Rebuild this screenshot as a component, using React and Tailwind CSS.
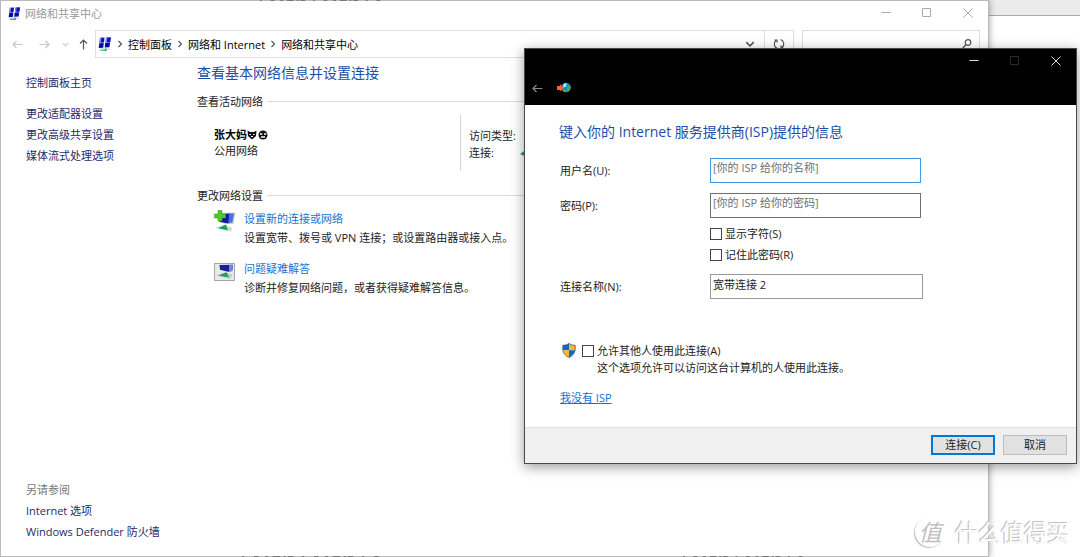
import React, { useState } from 'react';

const NetIcon = ({ className }) => (
  <svg viewBox="0 0 14 14" className={className} aria-hidden="true">
    <path d="M2 .8l4.500-.3-.5 5-4.600 .3zM8 .6l5-.4-.6 5-4.900 .3z" fill="#0b12b8" />
    <path d="M1.300 6.300l4.500-.3-.6 4.800-4.500 .3zM7.200 5.900l4.900-.3-.7 4.700-4.700 .3z" fill="#0408a4" />
    <path d="M2 .8l1.300-.1-.5 5-1.400 .1zM8 .6l1.300-.1-.5 4.900-1.300 .1z" fill="#7c9af0" />
    <path d="M.5 11.800l5-.7 7 .6-.5 1.300z" fill="#cfd8d4" />
    <path d="M1.500 12.500l5 .2 1.700-1.700.6 3.100-6.500-.5z" fill="#1fb457" />
  </svg>
);

const NewConnectionIcon = () => (
  <svg viewBox="0 0 22 24" className="w-[22px] h-6 shrink-0" aria-hidden="true">
    <path d="M8 4l13.500-.5-2 11.500-10-.5z" fill="#c3cbe6" />
    <path d="M6 5l10-.5-1.500 10-9-1.500z" fill="#1318a8" />
    <path d="M15 4.600l5-.2-1.600 8.800-4 1.200z" fill="#4d6ee0" />
    <path d="M4 1.500h4V5h3.500v4H8v3H4V9H.5V5H4z" fill="#4fc92c" stroke="#35a41c" strokeWidth=".6" />
    <path d="M.5 18.500l11-2.500 7 3-1.500 3.500-11-2.500z" fill="#d3d9d6" />
    <path d="M4 19.200l8-3.700 .5 2 1.500 3.800-4-.8z" fill="#11a550" />
  </svg>
);

const TroubleshootIcon = () => (
  <svg viewBox="0 0 21 18" className="w-[21px] h-[18px] shrink-0" aria-hidden="true">
    <rect x=".5" y=".5" width="20" height="17" fill="#e9eaec" stroke="#a5a7ab" />
    <path d="M5.500 2l13.500-.3-.8 6.300-4.200 .8-8-2z" fill="#1a2099" />
    <path d="M15 2l4-.2-.8 6.200-3.200 .5z" fill="#7087dd" />
    <path d="M2 12l9-2.500 8 2-3 4.500-9-2z" fill="#c4cccc" />
    <path d="M4.500 12.500l8-3.200 2.500 5-5-.8z" fill="#13a35a" />
  </svg>
);

const GlobeIcon = () => (
  <svg viewBox="0 0 15 12" className="w-[15px] h-3" aria-hidden="true">
    <circle cx="9" cy="5.500" r="4.800" fill="#2379d8" />
    <path d="M10.500 3.500l2.800 0q1 3.500-2 6L9.500 7.500zM5.500 7.500l4 .5-.5 2.300q-2 0-3.500-1.500z" fill="#35b44a" />
    <path d="M6 3q1-2 3.500-2L9.500 4 6.500 6z" fill="#a9e6ee" />
    <path d="M0 4h3V2l3.500 4L3 9.500V8H0z" fill="#ef6a2a" />
  </svg>
);

const Shield = () => (
  <svg viewBox="0 0 14 15" className="w-3.5 h-[15px] shrink-0" aria-hidden="true">
    <path d="M7 .5Q4.500 2.500.8 2.300V7.300H7z" fill="#0f68c8" />
    <path d="M7 .5Q9.500 2.500 13.200 2.300V7.300H7z" fill="#fbb829" />
    <path d="M.8 7.300H7v7.200Q2 12 .8 7.300z" fill="#fbb829" />
    <path d="M7 7.300h6.200Q12 12 7 14.500z" fill="#0f68c8" />
    <path d="M7 .5Q4.500 2.500.8 2.300V7Q1.500 12 7 14.500 12.500 12 13.200 7V2.300Q9.500 2.500 7 .5z" fill="none" stroke="#4d5968" strokeWidth=".8" />
  </svg>
);

const Arrow = ({ className }) => (
  <svg viewBox="0 0 11 9" className={className} fill="none" stroke="currentColor" strokeWidth="1.200" aria-hidden="true">
    <path d="M10.500 4.500H1M4.500 1L1 4.500 4.500 8" />
  </svg>
);

const Chevron = ({ className }) => (
  <svg viewBox="0 0 8 8" className={className} fill="none" stroke="currentColor" strokeWidth="1.200" aria-hidden="true">
    <path d="M2.500 1l3 3-3 3" />
  </svg>
);

const WindowButtons = ({ className, maxClass = '' }) => (
  <div className={`flex ${className}`}>
    <button aria-label="最小化" className="w-[41px] h-6 flex items-center justify-center">
      <svg viewBox="0 0 10 10" className="size-2.5" stroke="currentColor"><path d="M.5 4.500h9" /></svg>
    </button>
    <button aria-label="最大化" className={`w-[41px] h-6 flex items-center justify-center ${maxClass}`}>
      <svg viewBox="0 0 10 10" className="size-2.5" fill="none" stroke="currentColor"><path d="M.5 .5h8v8h-8z" /></svg>
    </button>
    <button aria-label="关闭" className="w-[41px] h-6 flex items-center justify-center">
      <svg viewBox="0 0 10 10" className="size-2.5" fill="none" stroke="currentColor"><path d="M.5 .5l9 9M9.500 .5l-9 9" /></svg>
    </button>
  </div>
);

const SectionTitle = ({ children }) => (
  <div className="flex items-center gap-1">
    <h2>{children}</h2>
    <div className="flex-1 h-px bg-[#dcdcdc]" />
  </div>
);

const Check = ({ id, label }) => (
  <div className="flex items-center gap-[3px] h-[21px]">
    <input id={id} type="checkbox" className="appearance-none size-3 border border-[#444] bg-white checked:bg-[#0078d7]" />
    <label htmlFor={id}>{label}</label>
  </div>
);

const crumbs = ['控制面板', '网络和 Internet', '网络和共享中心'];

const NetworkCenter = () => (
  <div className="absolute inset-y-0 left-0 right-[91px] bg-white border border-[#b9b9b9] shadow-[1px_0_6px_rgba(0,0,0,0.3)] flex flex-col">
    <header className="h-[29px] shrink-0 flex items-start justify-between pl-[7px]">
      <div className="flex items-center gap-1 h-[25px] text-[#999]">
        <NetIcon className="size-[13px]" />
        <span>网络和共享中心</span>
      </div>
      <WindowButtons className="text-[#aaa]" />
    </header>

    <nav className="h-7 shrink-0 flex items-stretch pr-2">
      <div className="w-[94px] shrink-0 flex items-center pl-[11px] text-[#c8c8c8]">
        <Arrow className="w-[11px] h-[9px]" />
        <Arrow className="w-[11px] h-[9px] ml-4 rotate-180" />
        <Chevron className="size-[7px] ml-3 rotate-90" />
        <Arrow className="w-[11px] h-[9px] ml-[9px] rotate-90 text-[#555]" />
      </div>
      <div className="flex-1 flex border border-[#dedede]">
        <div className="flex-1 flex items-center pl-0.5">
          <NetIcon className="size-3.5" />
          {crumbs.map((c) => (
            <React.Fragment key={c}>
              <Chevron className="size-2 mx-1 text-[#555]" />
              <a href="#" className="text-black">{c}</a>
            </React.Fragment>
          ))}
        </div>
        <button aria-label="展开" className="w-7 flex items-center justify-center text-[#555]">
          <Chevron className="size-2.5 rotate-90" />
        </button>
        <button aria-label="刷新" className="w-[29px] border-l border-[#dedede] flex items-center justify-center text-[#555]">
          <svg viewBox="0 0 12 12" className="size-3" fill="none" stroke="currentColor" strokeWidth="1.200">
            <path d="M4.500 10.500A4.600 4.600 0 0 1 3 2.500M1.500 2h2.500v2.500M7.500 1.500A4.600 4.600 0 0 1 9 9.500M10.500 10H8V7.500" />
          </svg>
        </button>
      </div>
      <div className="w-[178px] ml-2 flex items-center border border-[#dedede] pr-[7px]">
        <input aria-label="搜索" className="flex-1 min-w-0 outline-none" />
        <svg viewBox="0 0 10 10" className="size-2.5 text-[#555]" fill="none" stroke="currentColor" strokeWidth="1.200">
          <circle cx="6" cy="3.500" r="2.800" /><path d="M4 5.500L.5 9.500" />
        </svg>
      </div>
    </nav>

    <div className="flex-1 flex">
      <aside className="w-[171px] shrink-0 mr-[25px] pl-[25px] pb-3.5 flex flex-col text-[#1f2a6b] leading-[21px]">
        <a href="#" className="mt-3.5">控制面板主页</a>
        <a href="#" className="mt-2.5">更改适配器设置</a>
        <a href="#">更改高级共享设置</a>
        <a href="#">媒体流式处理选项</a>
        <h2 className="mt-auto text-[#777]">另请参阅</h2>
        <a href="#">Internet 选项</a>
        <a href="#">Windows Defender 防火墙</a>
      </aside>
      <main className="flex-1">
        <h1 className="mt-[3px] text-[14px] leading-6 text-[#1c4da8]">查看基本网络信息并设置连接</h1>
        <div className="mt-2">
          <SectionTitle>查看活动网络</SectionTitle>
        </div>
        <div className="flex mt-[5px] h-14">
          <div className="w-[264px] pl-[17px] pt-3 border-r border-[#d4d4d4] leading-4 shrink-0">
            <p className="font-bold text-black flex items-center">
              张大妈
              <svg viewBox="0 0 22 10" className="w-[22px] h-2.5" aria-hidden="true">
                <path d="M.5 .5l2.500 1.500h4L9.500 .5 9 6 5 9.500 1 6z" fill="#111" />
                <path d="M2.500 4.500h1.500M6 4.500h1.500M4 6.500h2" stroke="#fff" />
                <circle cx="16" cy="5" r="4.500" fill="#111" />
                <path d="M13 4h2.300M17 4h2.300M14 7h4" stroke="#fff" strokeWidth="1.400" />
              </svg>
            </p>
            <p>公用网络</p>
          </div>
          <div className="pl-2 pt-3 leading-[17px]">
            <p>访问类型:</p>
            <p className="flex items-center">
              <span className="w-[51px]">连接:</span>
              <svg viewBox="0 0 8 8" className="size-2"><path d="M0 5l4-3v5z" fill="#21a05a" /></svg>
            </p>
          </div>
        </div>
        <div className="mt-4">
          <SectionTitle>更改网络设置</SectionTitle>
        </div>
        <div className="flex gap-2 mt-[5px] pl-[17px]">
          <NewConnectionIcon />
          <div className="leading-[19px]">
            <a href="#" className="text-[#1274cf]">设置新的连接或网络</a>
            <p>设置宽带、拨号或 VPN 连接；或设置路由器或接入点。</p>
          </div>
        </div>
        <div className="flex gap-2 mt-3 pl-[17px]">
          <div className="w-[22px] pt-1"><TroubleshootIcon /></div>
          <div className="leading-[19px]">
            <a href="#" className="text-[#1274cf]">问题疑难解答</a>
            <p>诊断并修复网络问题，或者获得疑难解答信息。</p>
          </div>
        </div>
      </main>
    </div>
  </div>
);

const IspDialog = () => {
  const [name, setName] = useState('宽带连接 2');

  return (
    <section role="dialog" className="absolute left-[524px] right-[3px] top-12 bg-white border border-[#4a4a4a] shadow-[0_3px_12px_rgba(0,0,0,0.4)]">
      <header className="bg-black h-14 border-b border-black text-[#ddd]">
        <div className="flex justify-end"><WindowButtons maxClass="text-[#2c2c2c]" /></div>
        <div className="flex items-center gap-3.5 pl-[7px] pt-1.5 h-6">
          <button aria-label="返回" className="text-[#888]"><Arrow className="w-[11px] h-[9px]" /></button>
          <GlobeIcon />
        </div>
      </header>

      <form onSubmit={(e) => e.preventDefault()}>
        <div className="pl-[35px] pt-[17px] h-[322px]">
          <h1 className="text-[14px] leading-5 -ml-px text-[#1c4da8]">键入你的 Internet 服务提供商(ISP)提供的信息</h1>
          <div className="grid grid-cols-[150px_213px] mt-4">
            <label htmlFor="user" className="leading-[25px]">用户名(U):</label>
            <input id="user" autoFocus placeholder="[你的 ISP 给你的名称]" className="h-[25px] w-[211px] border border-[#3d9be9] px-0.5 pb-1.5 outline-none caret-black placeholder:text-[#707070]" />
            <label htmlFor="pass" className="leading-[25px] mt-2.5">密码(P):</label>
            <input id="pass" placeholder="[你的 ISP 给你的密码]" className="h-[25px] w-[211px] mt-2.5 border border-[#707070] px-0.5 pb-1.5 outline-none placeholder:text-[#707070]" />
            <div className="col-start-2 mt-[5px]">
              <Check id="show" label="显示字符(S)" />
              <Check id="remember" label="记住此密码(R)" />
            </div>
            <label htmlFor="conn" className="leading-[25px] mt-[9px]">连接名称(N):</label>
            <input id="conn" value={name} onChange={(e) => setName(e.target.value)} className="h-[25px] mt-[9px] border border-[#999] px-0.5 pb-1.5 outline-none" />
          </div>
          <div className="flex items-center gap-1.5 mt-[41px] pl-0.5">
            <Shield />
            <Check id="share" label="允许其他人使用此连接(A)" />
          </div>
          <p className="pl-[37px] -mt-0.5">这个选项允许可以访问这台计算机的人使用此连接。</p>
          <a href="#" className="inline-block mt-[13px] text-[#1274cf] underline">我没有 ISP</a>
        </div>
        <footer className="flex justify-end gap-2 bg-[#f0f0f0] border-t border-[#dfdfdf] px-[9px] pt-[7px] pb-2">
          <button className="w-16 h-5 bg-[#e1e1e1] border-2 border-[#0078d7] leading-4">连接(C)</button>
          <button type="button" className="w-16 h-5 bg-[#e1e1e1] border border-[#bdbdbd] leading-4">取消</button>
        </footer>
      </form>
    </section>
  );
};

// slivers of the window behind that show past the edges
const Sliver = ({ className }) => (
  <svg viewBox="0 0 130 2" preserveAspectRatio="none" className={className} aria-hidden="true">
    <path d="M0 1h130" stroke="#777" strokeWidth="2" strokeDasharray="2 9 4 6 3 4 7 3 2 2 5 8" />
  </svg>
);

const Watermark = () => (
  <div className="absolute right-2.5 bottom-[9px] flex items-center gap-2.5 text-white pointer-events-none [text-shadow:-1px_-1px_0_#c4c4c4,-1px_0_1px_#c4c4c4]">
    <span className="size-[30px] rounded-full border border-white shadow-[-1px_1px_1px_#bbb] flex items-center justify-center text-[23px] leading-none italic text-[#c0c0c0] [text-shadow:none]">值</span>
    <span className="text-[23px] leading-8">什么值得买</span>
  </div>
);

export default function App() {
  return (
    <div className="relative min-h-screen overflow-hidden bg-white text-[11px] leading-[17px] text-[#222] font-['Open_Sans','Noto_Sans_CJK_SC',sans-serif]">
      <div className="h-4 bg-[#ebebeb] border-b border-[#aaa]" />
      <NetworkCenter />
      <Sliver className="absolute top-0 left-[260px] w-[125px] h-px" />
      <Sliver className="absolute bottom-0 left-[242px] w-[142px] h-px" />
      <Sliver className="absolute bottom-0 left-[683px] w-[124px] h-px" />
      <IspDialog />
      <Watermark />
    </div>
  );
}
